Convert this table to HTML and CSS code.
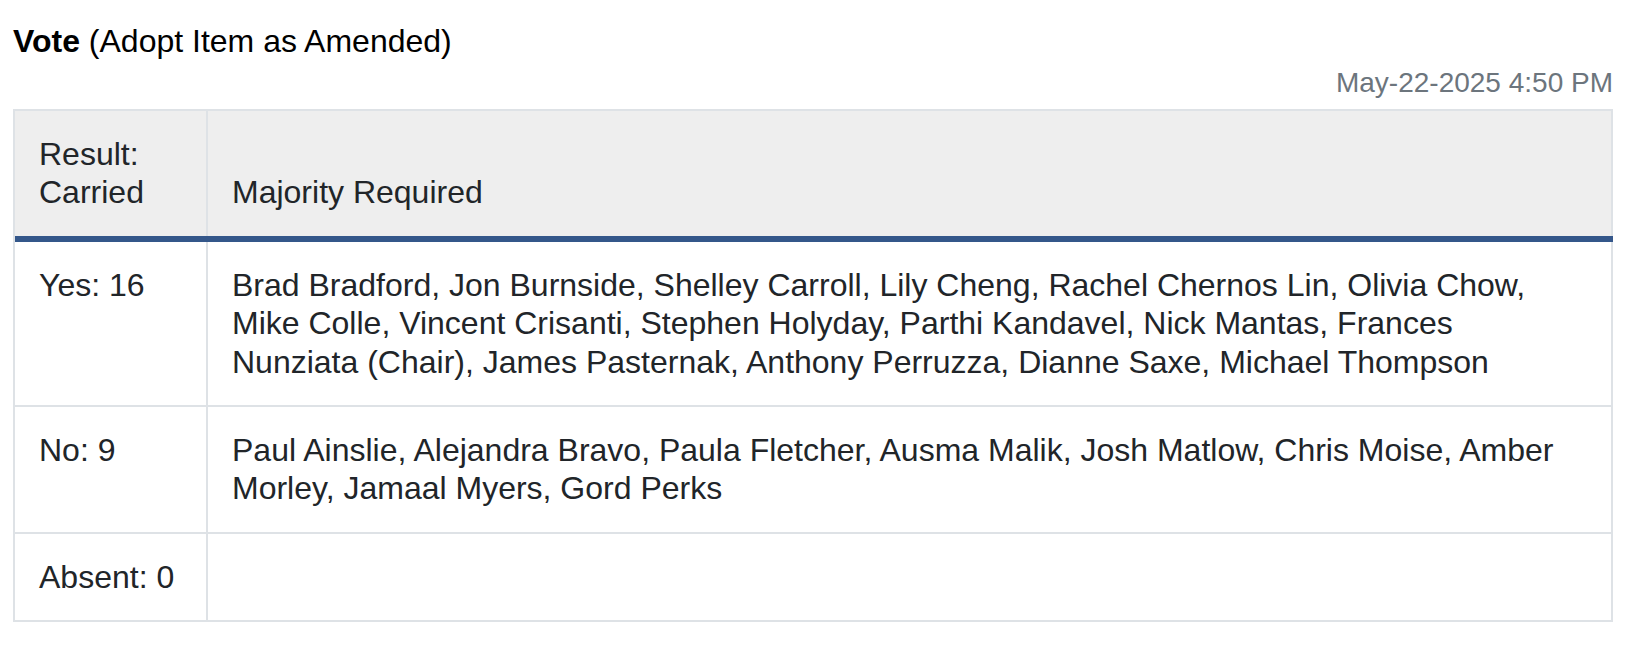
FILE: index.html
```html
<!DOCTYPE html>
<html lang="en">
<head>
    <meta charset="UTF-8">
    <title>Vote Record</title>
    <link rel="stylesheet" href="styles.css">
</head>
<body>
    <div class="vote">
        <h2 class="vote-title"><strong>Vote</strong> (Adopt Item as Amended)</h2>
        <div class="vote-date">May-22-2025 4:50 PM</div>
        <table class="vote-table">
            <thead>
                <tr>
                    <th class="col-result">Result:<br>Carried</th>
                    <th>Majority Required</th>
                </tr>
            </thead>
            <tbody>
                <tr>
                    <td class="col-result">Yes: 16</td>
                    <td>Brad Bradford, Jon Burnside, Shelley Carroll, Lily Cheng, Rachel Chernos Lin, Olivia Chow, Mike Colle, Vincent Crisanti, Stephen Holyday, Parthi Kandavel, Nick Mantas, Frances Nunziata (Chair), James Pasternak, Anthony Perruzza, Dianne Saxe, Michael Thompson</td>
                </tr>
                <tr>
                    <td class="col-result">No: 9</td>
                    <td>Paul Ainslie, Alejandra Bravo, Paula Fletcher, Ausma Malik, Josh Matlow, Chris Moise, Amber Morley, Jamaal Myers, Gord Perks</td>
                </tr>
                <tr>
                    <td class="col-result">Absent: 0</td>
                    <td></td>
                </tr>
            </tbody>
        </table>
    </div>
</body>
</html>
```

FILE: styles.css
```css
body {
    margin: 0;
    font-family: "Liberation Sans", Arial, sans-serif;
    font-size: 32px;
    line-height: 1.2;
    color: #212529;
    background: #fff;
}
.vote {
    width: 1600px;
    padding: 22px 0 0 13px;
}
.vote-title {
    margin: 0;
    font-size: 32px;
    font-weight: normal;
    color: #000;
}
.vote-title strong {
    font-weight: bold;
}
.vote-date {
    margin-top: 6px;
    font-size: 28px;
    text-align: right;
    color: #6c757d;
}
.vote-table {
    width: 1600px;
    margin-top: 9px;
    border-spacing: 0;
    border-left: 2px solid #dee2e6;
    border-top: 2px solid #dee2e6;
}
.vote-table th,
.vote-table td {
    padding: 24px;
    border-right: 2px solid #dee2e6;
    border-bottom: 2px solid #dee2e6;
    text-align: left;
    vertical-align: top;
    font-weight: normal;
}
/* header divider drawn as background so the blue rule runs unbroken */
.vote-table thead th {
    vertical-align: bottom;
    border-right: none;
    padding-right: 26px;
    border-bottom: 6px solid #34578a;
    background: linear-gradient(#dee2e6, #dee2e6) right top / 2px 100% no-repeat, #eeeeee;
}
.vote-table .col-result {
    box-sizing: border-box;
    width: 193px;
}
```
